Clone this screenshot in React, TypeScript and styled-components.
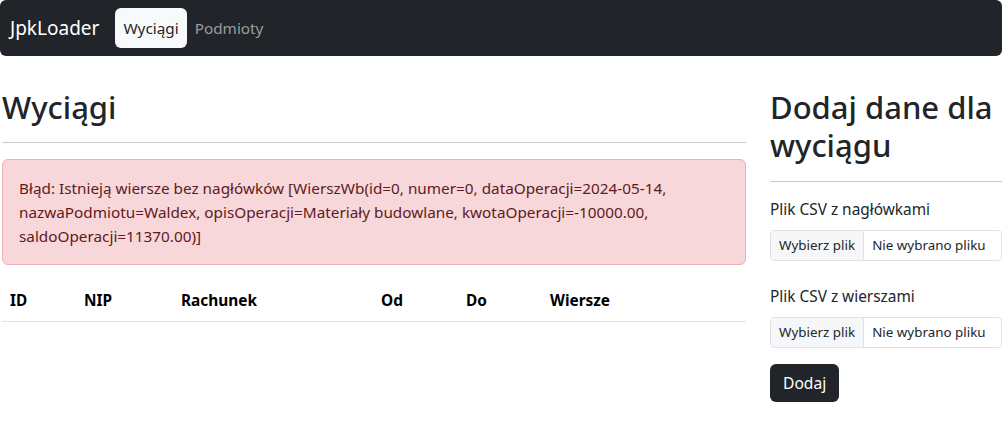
import styled, { createGlobalStyle } from 'styled-components';

const GlobalStyle = createGlobalStyle`
  * {
    box-sizing: border-box;
  }

  body {
    margin: 0;
    background: #fff;
    color: #212529;
    font-family: 'Noto Sans', 'Open Sans', sans-serif;
    font-size: 15.4px;
    line-height: 24px;
  }
`;

const Navbar = styled.nav`
  display: flex;
  align-items: center;
  width: 1002px;
  height: 56px;
  padding: 8px 10px;
  background-color: #212529;
  border-radius: 6px;
`;

const Brand = styled.a`
  margin-right: 16px;
  font-size: 19px;
  line-height: 30px;
  color: #fff;
  text-decoration: none;
`;

const NavLink = styled.a<{ $active?: boolean }>`
  padding: 8px;
  border-radius: 6px;
  font-size: 15.3px;
  line-height: 24px;
  text-decoration: none;
  color: ${(p) => (p.$active ? '#212529' : 'rgba(255, 255, 255, 0.55)')};
  background-color: ${(p) => (p.$active ? '#f8f9fa' : 'transparent')};
`;

const Main = styled.main`
  display: grid;
  grid-template-columns: 744px 232px;
  column-gap: 24px;
  padding: 32px 0 0 2px;
`;

const Column = styled.section`
  display: flex;
  flex-direction: column;
`;

const Title = styled.h2`
  margin: 0;
  font-size: 31px;
  font-weight: 500;
  line-height: 38.4px;
`;

const Rule = styled.hr`
  width: 100%;
  margin: 16px 0;
  border: 0;
  border-top: 1px solid #c8c9ca;
`;

const Alert = styled.div`
  margin-bottom: 16px;
  padding: 16px;
  border: 1px solid #f1aeb5;
  border-radius: 6px;
  background-color: #f8d7da;
  color: #5f1a21;
  font-size: 15.3px;
  line-height: 24px;
`;

const Table = styled.table`
  width: 100%;
  border-collapse: collapse;
  table-layout: fixed;
`;

const Th = styled.th<{ $w: number }>`
  width: ${(p) => p.$w}px;
  padding: 8px;
  border-bottom: 1px solid #dee2e6;
  font-weight: 700;
  text-align: left;
  color: #000;
`;

const Field = styled.div<{ $gap: number }>`
  display: flex;
  flex-direction: column;
  margin-bottom: ${(p) => p.$gap}px;
`;

const Label = styled.label`
  margin-bottom: 8px;
`;

const FileBox = styled.div`
  display: flex;
  height: 31px;
  border: 1px solid #dee2e6;
  border-radius: 4px;
  overflow: hidden;
  font-size: 13.4px;
  line-height: 29px;
`;

const FileButton = styled.span`
  padding: 0 8px;
  background-color: #f6f7f9;
  border-right: 1px solid #dee2e6;
  white-space: nowrap;
`;

const FileName = styled.span`
  padding: 0 8px;
  white-space: nowrap;
`;

const Button = styled.button`
  align-self: flex-start;
  height: 38px;
  padding: 0 13px;
  border: 0;
  border-radius: 6px;
  background-color: #212529;
  color: #fff;
  font-family: inherit;
  font-size: 15.6px;
`;

const columns: [string, number][] = [
  ['ID', 74],
  ['NIP', 97],
  ['Rachunek', 200],
  ['Od', 85],
  ['Do', 84],
  ['Wiersze', 204],
];

const FileInput = ({ label, gap }: { label: string; gap: number }) => (
  <Field $gap={gap}>
    <Label>{label}</Label>
    <FileBox>
      <FileButton>Wybierz plik</FileButton>
      <FileName>Nie wybrano pliku</FileName>
    </FileBox>
  </Field>
);

export default function App() {
  return (
    <>
      <GlobalStyle />
      <Navbar>
        <Brand>JpkLoader</Brand>
        <NavLink $active>Wyciągi</NavLink>
        <NavLink>Podmioty</NavLink>
      </Navbar>
      <Main>
        <Column>
          <Title>Wyciągi</Title>
          <Rule />
          <Alert>
            Błąd: Istnieją wiersze bez nagłówków [WierszWb(id=0, numer=0, dataOperacji=2024-05-14,
            nazwaPodmiotu=Waldex, opisOperacji=Materiały budowlane, kwotaOperacji=-10000.00,
            saldoOperacji=11370.00)]
          </Alert>
          <Table>
            <thead>
              <tr>
                {columns.map(([name, w]) => (
                  <Th key={name} $w={w}>
                    {name}
                  </Th>
                ))}
              </tr>
            </thead>
            <tbody />
          </Table>
        </Column>
        <Column>
          <Title>Dodaj dane dla wyciągu</Title>
          <Rule />
          <FileInput label="Plik CSV z nagłówkami" gap={24} />
          <FileInput label="Plik CSV z wierszami" gap={16} />
          <Button>Dodaj</Button>
        </Column>
      </Main>
    </>
  );
}
